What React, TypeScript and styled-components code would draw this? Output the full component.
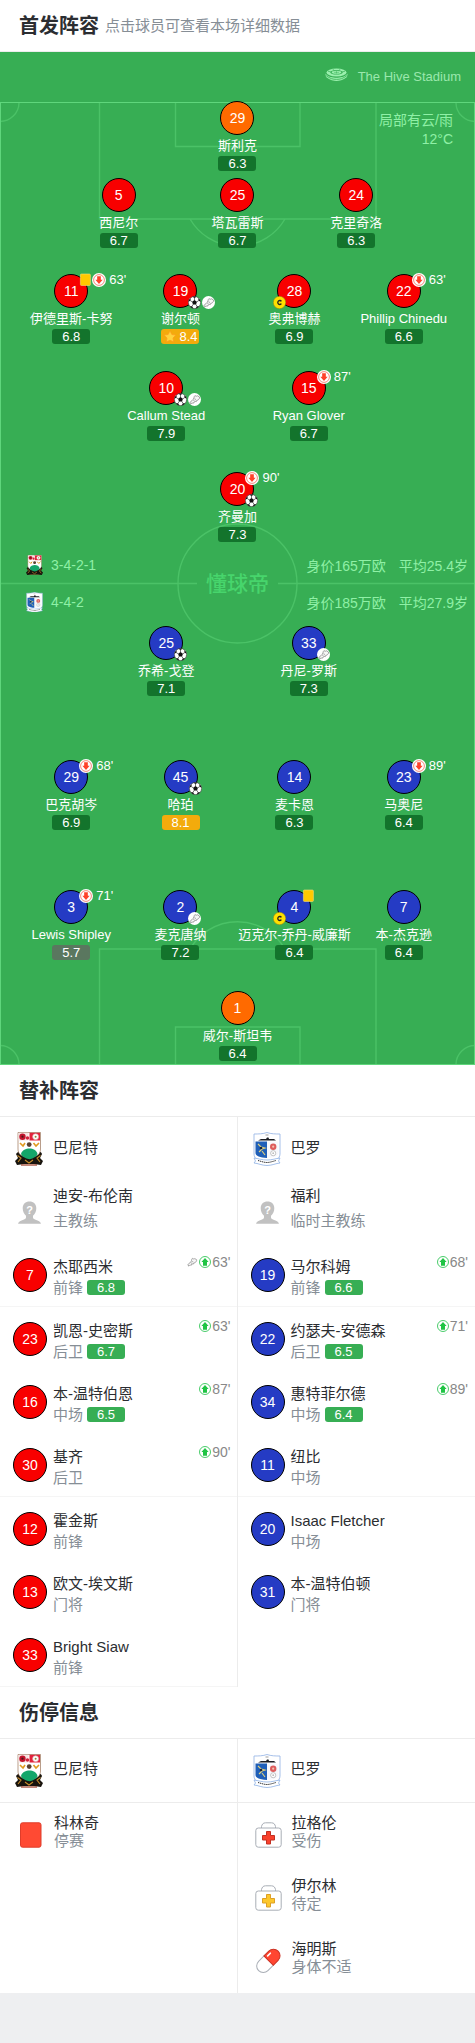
import React from "react";
import styled, { createGlobalStyle } from "styled-components";

type Side = "home" | "away";
type Mark = "card" | "off" | "goal" | "assist" | "captain";

interface Starter {
  no: number;
  name: string;
  score: string;
  keeper?: boolean;
  best?: boolean;
  captain?: boolean;
  top?: Mark[];
  minute?: string;
  bottom?: Mark[];
}

interface Line {
  gap: number;
  players: Starter[];
}

interface Sub {
  no: number;
  name: string;
  role: string;
  score?: string;
  minute?: string;
  assist?: boolean;
}

interface Absence {
  name: string;
  reason: string;
  kind: "red" | "injury" | "doubt" | "ill";
}

const homeLines: Line[] = [
  { gap: 0, players: [{ no: 29, name: "斯利克", score: "6.3", keeper: true }] },
  {
    gap: 7,
    players: [
      { no: 5, name: "西尼尔", score: "6.7" },
      { no: 25, name: "塔瓦雷斯", score: "6.7" },
      { no: 24, name: "克里奇洛", score: "6.3" },
    ],
  },
  {
    gap: 26,
    players: [
      { no: 11, name: "伊德里斯-卡努", score: "6.8", top: ["card", "off"], minute: "63'" },
      { no: 19, name: "谢尔顿", score: "8.4", best: true, bottom: ["goal", "assist"] },
      { no: 28, name: "奥弗博赫", score: "6.9", captain: true },
      { no: 22, name: "Phillip Chinedu", score: "6.6", top: ["off"], minute: "63'" },
    ],
  },
  {
    gap: 27,
    players: [
      { no: 10, name: "Callum Stead", score: "7.9", bottom: ["goal", "assist"] },
      { no: 15, name: "Ryan Glover", score: "6.7", top: ["off"], minute: "87'" },
    ],
  },
  {
    gap: 31,
    players: [
      { no: 20, name: "齐曼加", score: "7.3", top: ["off"], minute: "90'", bottom: ["goal"] },
    ],
  },
];

const awayLines: Line[] = [
  {
    gap: 0,
    players: [
      { no: 25, name: "乔希-戈登", score: "7.1", bottom: ["goal"] },
      { no: 33, name: "丹尼-罗斯", score: "7.3", bottom: ["assist"] },
    ],
  },
  {
    gap: 64,
    players: [
      { no: 29, name: "巴克胡岑", score: "6.9", top: ["off"], minute: "68'" },
      { no: 45, name: "哈珀", score: "8.1", bottom: ["goal"] },
      { no: 14, name: "麦卡恩", score: "6.3" },
      { no: 23, name: "马奥尼", score: "6.4", top: ["off"], minute: "89'" },
    ],
  },
  {
    gap: 60,
    players: [
      { no: 3, name: "Lewis Shipley", score: "5.7", top: ["off"], minute: "71'" },
      { no: 2, name: "麦克唐纳", score: "7.2", bottom: ["assist"] },
      { no: 4, name: "迈克尔-乔丹-威廉斯", score: "6.4", captain: true, top: ["card"] },
      { no: 7, name: "本-杰克逊", score: "6.4" },
    ],
  },
  { gap: 31, players: [{ no: 1, name: "威尔-斯坦韦", score: "6.4", keeper: true }] },
];

const homeSubs: Sub[] = [
  { no: 7, name: "杰耶西米", role: "前锋", score: "6.8", minute: "63'", assist: true },
  { no: 23, name: "凯恩-史密斯", role: "后卫", score: "6.7", minute: "63'" },
  { no: 16, name: "本-温特伯恩", role: "中场", score: "6.5", minute: "87'" },
  { no: 30, name: "基齐", role: "后卫", minute: "90'" },
  { no: 12, name: "霍金斯", role: "前锋" },
  { no: 13, name: "欧文-埃文斯", role: "门将" },
  { no: 33, name: "Bright Siaw", role: "前锋" },
];

const awaySubs: Sub[] = [
  { no: 19, name: "马尔科姆", role: "前锋", score: "6.6", minute: "68'" },
  { no: 22, name: "约瑟夫-安德森", role: "后卫", score: "6.5", minute: "71'" },
  { no: 34, name: "惠特菲尔德", role: "中场", score: "6.4", minute: "89'" },
  { no: 11, name: "纽比", role: "中场" },
  { no: 20, name: "Isaac Fletcher", role: "中场" },
  { no: 31, name: "本-温特伯顿", role: "门将" },
];

const homeAbsences: Absence[] = [{ name: "科林奇", reason: "停赛", kind: "red" }];

const awayAbsences: Absence[] = [
  { name: "拉格伦", reason: "受伤", kind: "injury" },
  { name: "伊尔林", reason: "待定", kind: "doubt" },
  { name: "海明斯", reason: "身体不适", kind: "ill" },
];

const shirt = { home: "#f80000", away: "#253bc4", keeper: "#ff6a00" };

const columnsFor: Record<number, string> = {
  1: "30%",
  2: "30% 30%",
  3: "25% 25% 25%",
  4: "22% 24% 24% 22%",
};

const Global = createGlobalStyle`
  *, *::before, *::after { box-sizing: border-box; }
  body {
    margin: 0;
    background: #eeeff1;
    color: #2b2d31;
    font-family: "Liberation Sans", "Noto Sans CJK SC", sans-serif;
    font-size: 15px;
  }
  button { font: inherit; color: inherit; background: none; border: 0; padding: 0; cursor: pointer; }
  h2, p, ul { margin: 0; padding: 0; }
  ul { list-style: none; }
  svg { display: block; flex: none; }
`;

const Page = styled.main`
  background: #fff;
`;

const SectionHead = styled.header`
  display: flex;
  align-items: center;
  gap: 6px;
  height: 52px;
  padding: 0 19px;
  border-bottom: 1px solid #ececec;
`;

const Title = styled.h2`
  font-size: 20px;
  line-height: 28px;
  font-weight: 700;
`;

const Hint = styled.p`
  font-size: 15px;
  line-height: 28px;
  color: #868e96;
`;

const Pitch = styled.section`
  background: #37ae54;
  color: #fff;
`;

const Venue = styled.div`
  display: flex;
  align-items: center;
  justify-content: flex-end;
  gap: 10px;
  height: 49px;
  padding: 0 14px;
  font-size: 13px;
  color: #9be8ad;

  svg {
    margin-bottom: 4px;
  }
`;

const Field = styled.div`
  position: relative;
  padding-bottom: 4px;
`;

const Markings = styled.svg`
  position: absolute;
  inset: 0;
  width: 100%;
  height: 100%;
  fill: none;
  stroke: #4bc267;
  stroke-width: 1.4;
`;

const Weather = styled.p`
  position: absolute;
  top: 10px;
  right: 22px;
  font-size: 14px;
  line-height: 19px;
  text-align: right;
  color: #8ff0a6;
`;

const LineRow = styled.div<{ $count: number; $gap: number }>`
  position: relative;
  display: grid;
  grid-template-columns: ${(p) => columnsFor[p.$count]};
  justify-content: center;
  justify-items: center;
  margin-top: ${(p) => p.$gap}px;
`;

const PlayerButton = styled.button`
  display: flex;
  flex-direction: column;
  align-items: center;
  height: 70px;
`;

const ShirtWrap = styled.span`
  position: relative;
  display: block;
`;

const Shirt = styled.span<{ $color: string }>`
  display: flex;
  flex: none;
  align-items: center;
  justify-content: center;
  width: 34px;
  height: 34px;
  border: 1px solid #000;
  border-radius: 50%;
  background: ${(p) => p.$color};
  color: #fff;
  font-size: 14px;
  line-height: 16px;
`;

const Marks = styled.span<{ $place: "top" | "bottom" | "captain" }>`
  position: absolute;
  display: flex;
  align-items: center;
  gap: 1px;
  height: 13px;
  left: ${(p) => (p.$place === "captain" ? "-4px" : "25px")};
  ${(p) => (p.$place === "top" ? "top: -1px;" : "bottom: -1px;")}
`;

const Minute = styled.span`
  margin-left: 2px;
  font-size: 13px;
  line-height: 13px;
`;

const PlayerName = styled.span`
  padding-top: 1px;
  font-size: 13px;
  line-height: 20px;
  white-space: nowrap;
`;

const Score = styled.span<{ $color: string }>`
  display: flex;
  align-items: center;
  justify-content: center;
  gap: 2px;
  width: 38px;
  height: 15px;
  border-radius: 3px;
  background: ${(p) => p.$color};
  color: #fff;
  font-size: 13px;
  line-height: 15px;
`;

const Middle = styled.div`
  position: relative;
  margin: 5px 0;
  font-size: 14px;
  color: #8ff0a6;
`;

const TeamStats = styled.div`
  display: flex;
  align-items: center;
  gap: 8px;
  height: 37px;
  padding: 0 7px 1px 26px;
`;

const Value = styled.span`
  margin-left: auto;
`;

const Age = styled.span`
  margin-left: 5px;
`;

const Brand = styled.strong`
  position: absolute;
  inset: 0;
  display: flex;
  align-items: center;
  justify-content: center;
  font-size: 21px;
  font-weight: 500;
  line-height: 24px;
  color: #47d56c;
`;

const Columns = styled.div`
  display: grid;
  grid-template-columns: 1fr 1fr;
`;

const Column = styled.div`
  position: relative;
`;

const Divider = styled.div`
  position: absolute;
  top: 0;
  bottom: 0;
  right: 0;
  width: 1px;
  background: #ececec;
`;

const TeamRow = styled.div<{ $line?: boolean }>`
  display: flex;
  align-items: center;
  gap: 10px;
  height: 64px;
  padding-left: 15px;
  border-bottom: ${(p) => (p.$line ? "1px solid #ececec" : "0")};
`;

const TeamName = styled.span`
  padding-bottom: 3px;
  line-height: 20px;
`;

const CoachRow = styled.div`
  display: flex;
  align-items: flex-start;
  gap: 12px;
  height: 62px;
  padding: 2px 0 0 18px;

  svg {
    margin-top: 18px;
  }
`;

const CoachText = styled.div`
  line-height: 25px;
`;

const Muted = styled.span`
  color: #868e96;
`;

const SubItem = styled.li`
  &:nth-child(3n + 1) {
    border-bottom: 1px solid #f5f5f5;
  }
`;

const SubButton = styled.button`
  display: flex;
  align-items: center;
  gap: 6px;
  width: 100%;
  height: 63px;
  padding: 0 7px 0 13px;
  text-align: left;
`;

const SubText = styled.span`
  display: flex;
  flex: 1;
  flex-direction: column;
  padding-top: 4px;
  line-height: 21px;
  white-space: nowrap;
`;

const RoleLine = styled.span`
  display: flex;
  align-items: center;
  gap: 4px;
`;

const SubEvents = styled.span`
  display: flex;
  align-self: flex-start;
  align-items: center;
  gap: 1px;
  margin-top: 11px;
  font-size: 14px;
  line-height: 16px;
  color: #888;
`;

const AbsenceItem = styled.li`
  display: flex;
  align-items: center;
  gap: 10px;
  height: 63px;
  padding-left: 17px;

  &:last-child {
    height: 64px;
  }
`;

const AbsenceText = styled.div`
  display: flex;
  flex-direction: column;
  padding-bottom: 6px;
  line-height: 18px;
`;

function StadiumIcon() {
  return (
    <svg width="23" height="13" viewBox="0 0 23 13" aria-hidden="true">
      <ellipse cx="11.5" cy="4.5" rx="10" ry="4" fill="#9bf0ae" />
      <ellipse cx="11.5" cy="4.3" rx="6.2" ry="2.3" fill="#37ae54" />
      <ellipse cx="11.5" cy="4.3" rx="4.8" ry="1.5" fill="#9bf0ae" />
      <path d="M9 4.300h5M11.500 3.200v2.200" stroke="#37ae54" strokeWidth=".5" />
      <path d="M3 3.2 6 4M8 1.2l1 1.4M15 1.2l-1 1.4M20 3.2 17 4" stroke="#37ae54" strokeWidth=".7" />
      <path d="M.4 5.5C3 9 8 9.8 11.5 9.8S20 9 22.6 5.5L22 9C18 12 14 13 11.5 13S5 12 1 9z" fill="#9bf0ae" />
      <path d="M1 7.6C5 10.6 8 11.4 11.5 11.4S18 10.6 22 7.6" fill="none" stroke="#37ae54" strokeWidth=".8" />
    </svg>
  );
}

function BarnetCrest({ size }: { size: number }) {
  return (
    <svg width={size} height={(size * 34) / 28} viewBox="0 0 28 34" role="img" aria-label="巴尼特">
      <path d="M1 22c3-4 5-2 6 0h14c2-3 5-3 6 0l-2 4 3 3-2 4-7-1H9l-7 1-2-4 3-3z" fill="#17130d" />
      <path d="M2.5 23.5 6 26l-3 4M25.5 23.5 22 26l3 4M10 28l4 3 4-3" fill="none" stroke="#c48a2c" strokeWidth="1.1" />
      <path d="M3 .5h22.5V17c0 5-3 8-11.300 8C6 25 3 22 3 17z" fill="#fff" stroke="#8a5a3a" strokeWidth=".6" />
      <path d="M14.5.8H25v7.700H14.500z" fill="#e2223b" />
      <path d="M3.500.8h10v7.700h-10z" fill="#f7e3e3" />
      <circle cx="7.500" cy="4.700" r="3.200" fill="#c3142c" />
      <circle cx="7.500" cy="4.700" r="1.100" fill="#4a1b1b" />
      <circle cx="12.500" cy="6" r="1.700" fill="#d3203a" />
      <circle cx="20.600" cy="4.700" r="3" fill="#fff" stroke="#d9a1a1" strokeWidth=".6" />
      <circle cx="20.600" cy="4.700" r="1" fill="#8c8a3d" />
      <path d="m5 11 3 3 2-3M18.500 11l2.500 3 3-3" fill="none" stroke="#e09a20" strokeWidth="1.600" />
      <circle cx="14.200" cy="12.600" r="2.400" fill="#5a4030" />
      <path d="M6 22c1-4 5-5.500 8.500-5.500s7 1.500 8 5.500c-1 3-4 4.200-8 5.300-4.500-1.100-7.500-2.300-8.500-5.300z" fill="#14a66a" />
      <path d="M6 33h16" stroke="#9b3a22" strokeWidth="1.200" />
    </svg>
  );
}

function BarrowCrest({ size }: { size: number }) {
  return (
    <svg width={size} height={(size * 34) / 28} viewBox="0 0 28 34" role="img" aria-label="巴罗">
      <path d="M1 2c4 0 9 0 13-1.500C18 2 23 2 27 2v20c0 5-6 8-13 10C7 30 1 27 1 22z" fill="#fff" stroke="#9cb9e6" strokeWidth=".9" />
      <path d="M2.500 9.500H14V26C7 25.500 2.500 24 2.500 21z" fill="#1f5fb8" />
      <path d="M14 9.500h11.500V21c0 3-4.500 4.500-11.500 5z" fill="#f7f8fc" />
      <path d="M5 8.500 8 7h5l1-1.500h1.500L16 7h5l2 1.500z" fill="#1b1d22" />
      <path d="M12.500 3h3" stroke="#777" strokeWidth=".7" />
      <path d="m5 12 3 3 4 1-3 1-3 3M9 19l3 4" fill="none" stroke="#e3d27a" strokeWidth="1.100" />
      <circle cx="8" cy="16" r="1.300" fill="#14223f" />
      <circle cx="20.200" cy="14.700" r="3.200" fill="#dd5c5c" />
      <circle cx="20.200" cy="14.700" r="1.100" fill="#f2c0b0" />
      <circle cx="20.200" cy="21.200" r="2.600" fill="#fff" stroke="#aaa" strokeWidth=".7" />
      <circle cx="20.200" cy="21.200" r=".9" fill="#bbb" />
      <path d="M1 26c4 .5 8 2 13 2s9-1.500 13-2l-1.500 3 1.500 2c-4 .3-8 2.500-13 2.500S5 31.300 1 31l1.500-2z" fill="#fff" stroke="#8db0e4" strokeWidth=".8" />
      <path d="M5 28.500c3 .8 6 2 9 2s6-1.200 9-2" fill="none" stroke="#333" strokeWidth="1" strokeDasharray="1.400 .7" />
    </svg>
  );
}

function Avatar() {
  return (
    <svg width="23" height="23" viewBox="0 0 23 23" aria-hidden="true">
      <path
        d="M11.500.5c4 0 6.800 2.700 6.800 6.800 0 3.200-1.300 5.900-3.300 7.500v1.700c0 1.200 1 1.700 2.600 2.200 2.600.8 4.800 1.600 5.400 4.100H0c.6-2.500 2.800-3.300 5.400-4.100C7 18.200 8 17.700 8 16.500v-1.700C6 13.200 4.700 10.500 4.700 7.300 4.700 3.200 7.500.5 11.500.5z"
        fill="#c1c1c1"
      />
      <text x="11.500" y="13" textAnchor="middle" fontSize="11" fontWeight="700" fill="#fff">
        ?
      </text>
    </svg>
  );
}

function Boot({ outline }: { outline?: boolean }) {
  return (
    <svg width={outline ? 12 : 13} height={outline ? 12 : 13} viewBox="0 0 13 13" aria-label="助攻">
      {!outline && <circle cx="6.500" cy="6.500" r="6.500" fill="#fff" />}
      <path
        d="M7 2.500c.7.800 1.800.9 2.500.3L11.500 4c.2 1.200-.3 2.300-1.300 2.800L5.500 9.600c-1 .7-2.300 1-3.300.6-.5-.6-.1-1.300.6-1.700C5 7.300 6 5.500 6.300 3.500z"
        fill="#f6f6f6"
        stroke="#8a8a8a"
        strokeWidth=".8"
      />
      <path d="m6.400 5.800 1.600.7M5.300 7.300l1.400.8M2.500 11l.8-.4M5.500 10.300l.6-.5M8.200 8.800l.6-.4" stroke="#8a8a8a" strokeWidth=".7" />
    </svg>
  );
}

function Ball() {
  return (
    <svg width="13" height="13" viewBox="0 0 13 13" aria-label="进球">
      <circle cx="6.500" cy="6.500" r="6.100" fill="#fff" stroke="#4a4a4a" strokeWidth=".7" />
      <path d="m6.500 4.100 2.400 1.700-.9 2.800H5l-.9-2.800z" fill="#111" />
      <path d="m4.400.8 2.100 1.300L8.600.8a6 6 0 0 0-4.200 0zM.5 5.400l1.900-.7.400-2.400A6 6 0 0 0 .5 5.400zM12.500 5.400l-1.900-.7-.4-2.400a6 6 0 0 1 2.300 3.100zM1.800 10.200l2.300.1 1.200 2.100a6 6 0 0 1-3.500-2.200zM11.200 10.200l-2.300.1-1.200 2.100a6 6 0 0 0 3.500-2.200z" fill="#111" />
      <path d="M6.500 1.900v2.400M2.300 4.600l2 1.300M10.700 4.600l-2 1.300M4 10.400l1.100-2M9 10.400l-1.100-2" stroke="#111" strokeWidth=".6" />
    </svg>
  );
}

function OffIcon() {
  return (
    <svg width="14" height="14" viewBox="0 0 13 13" aria-label="换下">
      <circle cx="6.500" cy="6.500" r="6.500" fill="#fff" />
      <circle cx="6.500" cy="6.500" r="5" fill="none" stroke="#f0604e" strokeWidth=".7" />
      <path d="M4.800 3h3.400v3.200h1.700L6.500 10.100 3.100 6.200h1.700z" fill="#ff4129" />
    </svg>
  );
}

function OnIcon() {
  return (
    <svg width="12" height="12" viewBox="0 0 12 12" aria-label="换上">
      <circle cx="6" cy="6" r="5.500" fill="#fff" stroke="#35c65a" strokeWidth=".9" />
      <path d="M6 2 9.600 5.900H8v3.800H4V5.900H2.400z" fill="#1fc444" />
    </svg>
  );
}

function YellowCard() {
  return (
    <svg width="12" height="13" viewBox="0 0 12 13" aria-label="黄牌">
      <rect x="1.400" y="1" width="10" height="11.500" rx="1" fill="#ffc900" stroke="#f3dc7a" strokeWidth=".6" />
    </svg>
  );
}

function CaptainIcon() {
  return (
    <svg width="13" height="13" viewBox="0 0 13 13" aria-label="队长">
      <circle cx="6.500" cy="6.500" r="6.200" fill="#ffe000" stroke="#8b7d1c" strokeWidth=".5" />
      <path d="M8.400 5.300A2 2 0 1 0 8.400 7.700" fill="none" stroke="#222" strokeWidth="1.300" />
    </svg>
  );
}

function Star() {
  return (
    <svg width="14" height="13" viewBox="0 0 14 13" aria-hidden="true">
      <path
        d="m7 .8 1.900 3.700 4.100.6-3 2.900.7 4.100L7 10.200l-3.700 1.900L4 8 1 5.100l4.100-.6z"
        fill="#ffd23c"
        stroke="#ff9d1c"
        strokeWidth=".8"
        strokeLinejoin="round"
      />
    </svg>
  );
}

function AbsenceIcon({ kind }: { kind: Absence["kind"] }) {
  if (kind === "red") {
    return (
      <svg width="27" height="26" viewBox="0 0 27 26" aria-hidden="true">
        <rect x="3.500" y=".8" width="20.500" height="24.400" rx="2" fill="#ff4a33" stroke="#df3d2a" />
      </svg>
    );
  }
  if (kind === "ill") {
    return (
      <svg width="27" height="26" viewBox="0 0 27 26" aria-hidden="true">
        <g transform="rotate(45 13.500 13)">
          <path d="M6.700 12h13.200v8.200a6.600 6.600 0 0 1-13.200 0z" fill="#fff" stroke="#a9aeb6" />
          <path d="M6.700 12.600V5.800a6.600 6.600 0 0 1 13.200 0v6.800z" fill="#ff4631" stroke="#cc3324" />
          <path d="M9.300 10V6.200" stroke="#fff" strokeWidth="1.600" strokeLinecap="round" />
        </g>
      </svg>
    );
  }
  const fill = kind === "injury" ? "#f9402b" : "#fcc72c";
  const edge = kind === "injury" ? "#c33022" : "#dd9f25";
  return (
    <svg width="27" height="26" viewBox="0 0 27 26" aria-hidden="true">
      <path d="M6.500 6V4.500C7 2.500 8 .8 10.500.8h6c2.500 0 3.500 1.700 4 3.700V6" fill="none" stroke="#a9aeb6" />
      <rect x=".8" y="6" width="25.400" height="19.200" rx="2.500" fill="#fff" stroke="#a9aeb6" />
      <path d="M11.500 9.500h4v4h4v4.500h-4v4h-4v-4h-4v-4.500h4z" fill={fill} stroke={edge} />
    </svg>
  );
}

const markIcon: Record<Mark, React.ReactElement> = {
  card: <YellowCard />,
  off: <OffIcon />,
  goal: <Ball />,
  assist: <Boot />,
  captain: <CaptainIcon />,
};

function scoreColor(score: string) {
  const value = Number(score);
  if (value >= 8) return "#f3ab0c";
  if (value < 6) return "#5a775f";
  return "#13742c";
}

function FieldPlayer({ player, side }: { player: Starter; side: Side }) {
  return (
    <PlayerButton type="button">
      <ShirtWrap>
        <Shirt $color={player.keeper ? shirt.keeper : shirt[side]}>{player.no}</Shirt>
        {player.top && (
          <Marks $place="top">
            {player.top.map((m) => (
              <React.Fragment key={m}>{markIcon[m]}</React.Fragment>
            ))}
            {player.minute && <Minute>{player.minute}</Minute>}
          </Marks>
        )}
        {player.bottom && (
          <Marks $place="bottom">
            {player.bottom.map((m) => (
              <React.Fragment key={m}>{markIcon[m]}</React.Fragment>
            ))}
          </Marks>
        )}
        {player.captain && <Marks $place="captain">{markIcon.captain}</Marks>}
      </ShirtWrap>
      <PlayerName>{player.name}</PlayerName>
      <Score $color={scoreColor(player.score)}>
        {player.best && <Star />}
        {player.score}
      </Score>
    </PlayerButton>
  );
}

function Lines({ lines, side }: { lines: Line[]; side: Side }) {
  return (
    <>
      {lines.map((line, i) => (
        <LineRow key={i} $count={line.players.length} $gap={line.gap}>
          {line.players.map((p) => (
            <FieldPlayer key={p.no} player={p} side={side} />
          ))}
        </LineRow>
      ))}
    </>
  );
}

function PitchMarkings() {
  return (
    <Markings viewBox="0 0 475 964" preserveAspectRatio="none" aria-hidden="true">
      <path d="M99.500 2V118H376V2M175.500 2V45.500H300V2M190 118a55 55 0 0 0 95 0M0 20.500A19 19 0 0 0 19 2M475 20.500A19 19 0 0 1 456 2" />
      <path d="M99.500 963V848H376V963M175.500 963V926H300V963M190 848a55 55 0 0 1 95 0M0 944.500A19 19 0 0 1 19 963M475 944.500A19 19 0 0 0 456 963" />
      <circle cx="237.500" cy="482.500" r="59.500" />
      <path d="M0 482.500H197M278 482.500H475" />
      <rect x=".5" y="1.500" width="474" height="962" stroke="#5fd67c" strokeWidth="1" />
    </Markings>
  );
}

function SubList({ subs, side }: { subs: Sub[]; side: Side }) {
  return (
    <ul>
      {subs.map((s) => (
        <SubItem key={s.no}>
          <SubButton type="button">
            <Shirt $color={shirt[side]}>{s.no}</Shirt>
            <SubText>
              <span>{s.name}</span>
              <RoleLine>
                <Muted>{s.role}</Muted>
                {s.score && <Score $color="#37ae54">{s.score}</Score>}
              </RoleLine>
            </SubText>
            {s.minute && (
              <SubEvents>
                {s.assist && <Boot outline />}
                <OnIcon />
                {s.minute}
              </SubEvents>
            )}
          </SubButton>
        </SubItem>
      ))}
    </ul>
  );
}

function Coach({ name, role }: { name: string; role: string }) {
  return (
    <CoachRow>
      <Avatar />
      <CoachText>
        <div>{name}</div>
        <Muted>{role}</Muted>
      </CoachText>
    </CoachRow>
  );
}

function AbsenceList({ items }: { items: Absence[] }) {
  return (
    <ul>
      {items.map((a) => (
        <AbsenceItem key={a.name}>
          <AbsenceIcon kind={a.kind} />
          <AbsenceText>
            <span>{a.name}</span>
            <Muted>{a.reason}</Muted>
          </AbsenceText>
        </AbsenceItem>
      ))}
    </ul>
  );
}

export default function App() {
  return (
    <>
      <Global />
      <Page>
        <SectionHead>
          <Title>首发阵容</Title>
          <Hint>点击球员可查看本场详细数据</Hint>
        </SectionHead>

        <Pitch>
          <Venue>
            <StadiumIcon />
            The Hive Stadium
          </Venue>
          <Field>
            <PitchMarkings />
            <Weather>
              局部有云/雨
              <br />
              12°C
            </Weather>
            <Lines lines={homeLines} side="home" />
            <Middle>
              <Brand>懂球帝</Brand>
              <TeamStats>
                <BarnetCrest size={17} />
                <span>3-4-2-1</span>
                <Value>身价165万欧</Value>
                <Age>平均25.4岁</Age>
              </TeamStats>
              <TeamStats>
                <BarrowCrest size={17} />
                <span>4-4-2</span>
                <Value>身价185万欧</Value>
                <Age>平均27.9岁</Age>
              </TeamStats>
            </Middle>
            <Lines lines={awayLines} side="away" />
          </Field>
        </Pitch>

        <SectionHead>
          <Title>替补阵容</Title>
        </SectionHead>
        <Columns>
          <Column>
            <Divider />
            <TeamRow>
              <BarnetCrest size={28} />
              <TeamName>巴尼特</TeamName>
            </TeamRow>
            <Coach name="迪安-布伦南" role="主教练" />
            <SubList subs={homeSubs} side="home" />
          </Column>
          <Column>
            <TeamRow>
              <BarrowCrest size={28} />
              <TeamName>巴罗</TeamName>
            </TeamRow>
            <Coach name="福利" role="临时主教练" />
            <SubList subs={awaySubs} side="away" />
          </Column>
        </Columns>

        <SectionHead>
          <Title>伤停信息</Title>
        </SectionHead>
        <Columns>
          <Column>
            <Divider />
            <TeamRow $line>
              <BarnetCrest size={28} />
              <TeamName>巴尼特</TeamName>
            </TeamRow>
            <AbsenceList items={homeAbsences} />
          </Column>
          <Column>
            <TeamRow $line>
              <BarrowCrest size={28} />
              <TeamName>巴罗</TeamName>
            </TeamRow>
            <AbsenceList items={awayAbsences} />
          </Column>
        </Columns>
      </Page>
    </>
  );
}
